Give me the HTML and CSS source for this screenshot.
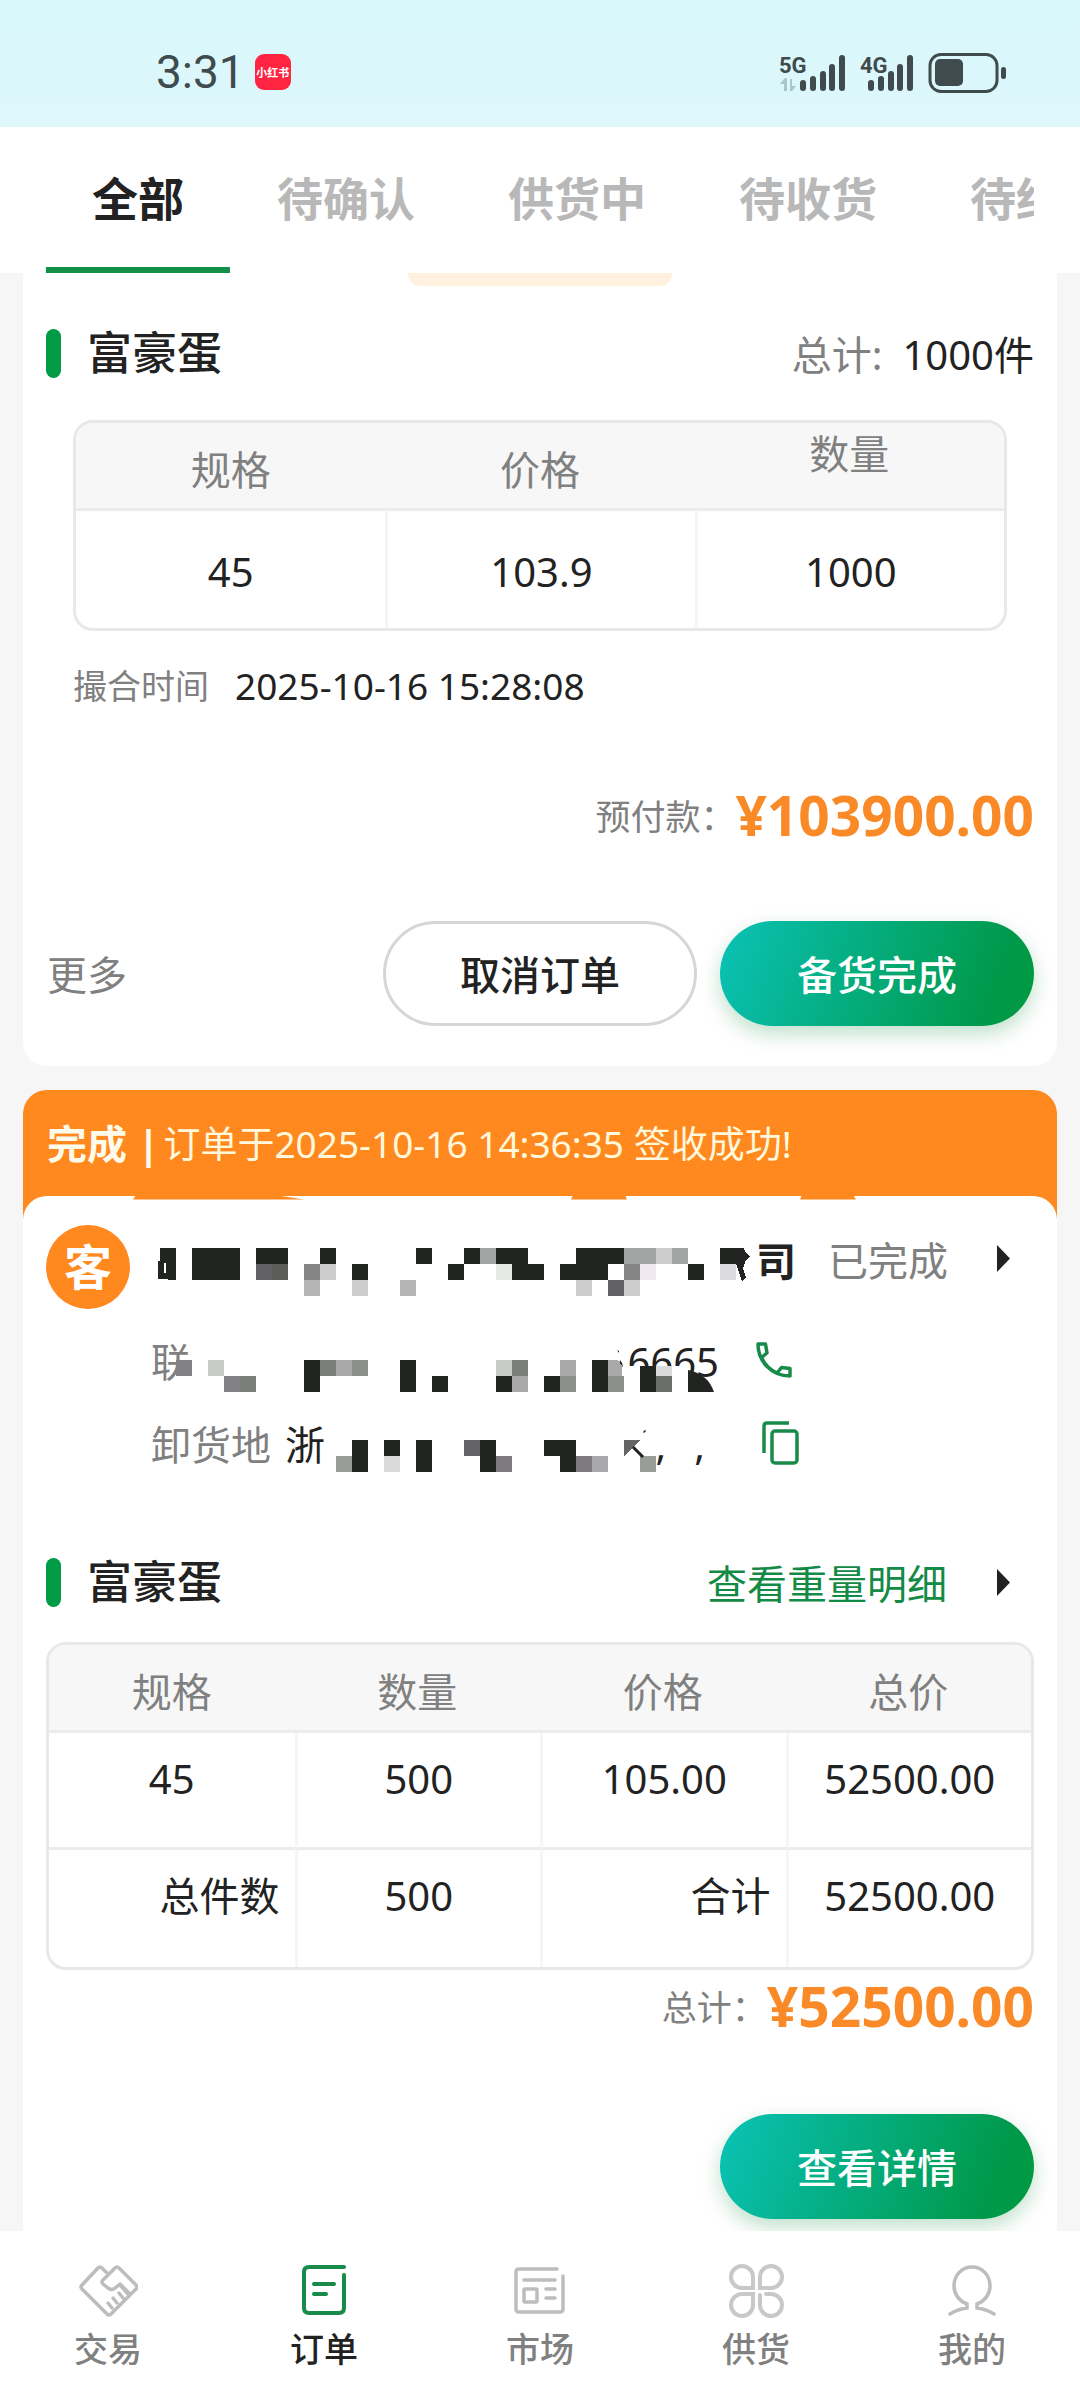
FILE: index.html
```html
<!DOCTYPE html>
<html lang="zh-CN">
<head>
<meta charset="utf-8">
<meta name="viewport" content="width=device-width, initial-scale=1">
<title>订单</title>
<link rel="stylesheet" href="styles.css">
</head>
<body>
<header class="status">
  <span class="clock">3:31</span>
  <span class="app-badge">小红书</span>
  <svg class="status-icons" width="232" height="44" viewBox="776 50 232 44" fill="#404b4d">
    <text class="net" x="779" y="73">5G</text>
    <path fill="#a9c7ca" d="M780 84l5-6h2v13h-3v-7zM790 79h2v7h4l-4 5h-2z"/>
    <rect x="800" y="80" width="6" height="11" rx="3"/><rect x="810" y="76" width="6" height="15" rx="3"/><rect x="820" y="71" width="6" height="20" rx="3"/><rect x="829" y="64" width="6" height="27" rx="3"/><rect x="839" y="55" width="6" height="36" rx="3"/>
    <text class="net" x="860" y="73">4G</text>
    <rect x="868" y="80" width="6" height="11" rx="3"/><rect x="878" y="76" width="6" height="15" rx="3"/><rect x="888" y="71" width="6" height="20" rx="3"/><rect x="897" y="64" width="6" height="27" rx="3"/><rect x="907" y="55" width="6" height="36" rx="3"/>
    <rect x="930" y="54.500" width="67" height="37" rx="11" fill="none" stroke="#404b4d" stroke-width="3"/>
    <rect x="935" y="59" width="28" height="27" rx="5"/><rect x="1001" y="67" width="5" height="12" rx="2.500"/>
  </svg>
</header>

<nav class="tabs">
  <div class="tab-strip">
    <a class="tab active" href="#">全部</a>
    <a class="tab" href="#">待确认</a>
    <a class="tab" href="#">供货中</a>
    <a class="tab" href="#">待收货</a>
    <a class="tab" href="#">待结算</a>
  </div>
</nav>

<main class="orders">
  <article class="card card-first">
    <div class="pill"></div>
    <div class="title-row first-title">
      <h2 class="title">富豪蛋</h2>
      <p class="count"><span class="muted">总计:</span>1000件</p>
    </div>
    <div class="grid-box inset">
      <table>
        <thead><tr><th>规格</th><th>价格</th><th class="raised">数量</th></tr></thead>
        <tbody><tr class="roomy"><td>45</td><td>103.9</td><td>1000</td></tr></tbody>
      </table>
    </div>
    <p class="time"><span class="muted">撮合时间</span><time>2025-10-16 15:28:08</time></p>
    <p class="sum prepaid"><span class="sum-label">预付款：</span><strong>¥103900.00</strong></p>
    <div class="actions">
      <a class="more" href="#">更多</a>
      <button class="btn plain" type="button">取消订单</button>
      <button class="btn primary" type="button">备货完成</button>
    </div>
  </article>

  <article class="card card-done">
    <p class="banner"><strong>完成 |</strong><span>订单于2025-10-16 14:36:35 签收成功!</span></p>
    <div class="body">
      <svg class="scallops" width="730" height="4" viewBox="130 1196 730 4" fill="#ff881f"><path d="M136 1195H275L304 1199.500H133zM573 1195H625L627 1199.500H571zM802 1195H853L856 1199.500H800z"/></svg>
      <section class="customer">
        <div class="company">
          <span class="avatar">客</span>
          <span class="name">司</span>
          <span class="state">已完成</span>
          <svg class="arrow" width="13" height="27" viewBox="0 0 13 27"><path d="M0 0 13 13.500 0 27z" fill="#222"/></svg>
        </div>
        <div class="info">
          <span class="muted">联</span><span class="phone">6665</span>
          <button class="icon-btn call" type="button" aria-label="拨打电话">
            <svg width="36" height="36" viewBox="0 0 36 36" fill="none" stroke="#188a49" stroke-width="3.500" stroke-linejoin="round"><path d="M2 2h7.500l1.500 9-5.500 4.500C9 23 14 28 21 31l4.500-5.500 8.500 1V34C15 34 2 19 2 2z"/></svg>
          </button>
        </div>
        <div class="info">
          <span class="muted">卸货地</span><span class="address"><span>浙</span><span class="commas"><span>,</span><span>,</span></span></span>
          <button class="icon-btn copy" type="button" aria-label="复制地址">
            <svg width="38" height="44" viewBox="0 0 38 44" fill="none" stroke="#188a49" stroke-width="3.500"><path d="M2 32V5q0-3 3-3h22"/><rect x="10" y="10" width="25" height="32" rx="3"/></svg>
          </button>
        </div>
        <svg class="mosaic" width="800" height="260" viewBox="46 1225 800 260" shape-rendering="crispEdges">
          <path fill="#222422" d="M160 1248h16v32h-8v-1h-10v-18h2zM192 1248h48v32h-48zM256 1248h32v16h-32zM320 1248h16v16h-16zM352 1264h16v16h-16zM416 1248h16v16h-16zM448 1264h16v16h-16zM464 1248h16v16h-16zM496 1248h32v16h16v16h-32v-16h-16zM576 1248h48v16h-16v16h-48v-16h16zM688 1264h16v16h-16zM720 1248h24l1 4 5 5-4 3-3 9 3 8-4 4-6-17h-16z"/>
          <path fill="#fff" d="M164 1263h2v10h-2zM720 1264h16v16h-16z"/>
          <path fill="#626163" d="M256 1264h16v16h-16zM608 1280h16v16h-16z"/>
          <path fill="#5c5d5b" d="M272 1264h16v16h-16z"/>
          <path fill="#848584" d="M304 1264h16v16h-16zM624 1264h16v16h-16z"/>
          <path fill="#cdcdcd" d="M320 1264h16v16h-16zM352 1280h16v16h-16zM576 1280h16v16h-16zM624 1280h16v16h-16zM656 1248h16v16h-16z"/>
          <path fill="#b4b4b4" d="M304 1280h16v16h-16zM400 1280h16v16h-16z"/>
          <path fill="#a3a5a4" d="M480 1248h16v16h-16zM624 1248h32v16h-32zM672 1248h16v16h-16z"/>
          <path fill="#e5eae6" d="M496 1264h16v16h-16z"/><path fill="#f0eaef" d="M640 1264h16v16h-16z"/><path fill="#dcdce0" d="M720 1264h16v16h-16z"/>

          <path fill="#fff" d="M180 1376h20v20h-20zM600 1366h90v28h-90z"/>
          <path fill="#828183" d="M176 1360h16v16h-16zM224 1376h16v16h-16z"/>
          <path fill="#7b7e7b" d="M240 1376h16v16h-16zM320 1360h16v16h-16zM512 1360h16v16h-16z"/>
          <path fill="#c8cac8" d="M208 1360h16v16h-16zM496 1360h16v16h-16z"/>
          <path fill="#222422" d="M304 1360h16v32h-16zM400 1360h16v32h-16zM432 1376h16v16h-16zM496 1376h16v16h-16zM544 1376h16v16h-16zM592 1360h16v32h-16zM640 1366h16v26h-16z"/>
          <path fill="#222422" shape-rendering="auto" d="M688 1370C702 1373 710 1380 714 1392h-26zM617 1350l2 1v2zM620 1360q3 3 3 7l-4-3z"/>
          <path fill="#a9a9aa" d="M336 1360h16v16h-16zM512 1376h16v16h-16zM560 1360h16v16h-16zM608 1360h10l4 6v10h-14z"/>
          <path fill="#8b8e8a" d="M352 1360h16v16h-16zM560 1376h16v16h-16zM608 1376h16v16h-16z"/>
          <path fill="#dadada" d="M656 1366h16v10h-16z"/><path fill="#6a6e69" d="M656 1376h16v16h-16z"/>

          <path fill="#222422" d="M352 1440h16v32h-16zM384 1440h16v16h-16zM416 1440h16v32h-16zM480 1440h16v32h-16zM544 1440h32v32h-16v-16h-16z"/>
          <path fill="#9a9c9a" d="M336 1456h16v16h-16zM640 1456h16v16h-16z"/><path fill="#dadada" d="M384 1456h16v16h-16z"/>
          <path fill="#646366" d="M464 1440h16v16h-16zM624 1440h16l-16 16z"/>
          <path fill="#7c7a7d" d="M496 1456h16v16h-16zM576 1456h16v16h-16z"/><path fill="#a9a8ab" d="M592 1456h16v16h-16z"/>
          <path stroke="#222" stroke-width="3" shape-rendering="auto" d="m633 1447 10 10M644 1431l1 1"/>
        </svg>
      </section>

      <div class="title-row second-title">
        <h2 class="title">富豪蛋</h2>
        <a class="detail" href="#">查看重量明细</a>
        <svg class="arrow" width="13" height="27" viewBox="0 0 13 27"><path d="M0 0 13 13.500 0 27z" fill="#222"/></svg>
      </div>
      <div class="grid-box">
        <table>
          <thead><tr><th>规格</th><th>数量</th><th>价格</th><th>总价</th></tr></thead>
          <tbody>
            <tr><td>45</td><td>500</td><td>105.00</td><td>52500.00</td></tr>
            <tr><td class="end">总件数</td><td>500</td><td class="end">合计</td><td>52500.00</td></tr>
          </tbody>
        </table>
      </div>
      <p class="sum total"><span class="sum-label">总计：</span><strong>¥52500.00</strong></p>
      <div class="actions"><button class="btn primary" type="button">查看详情</button></div>
    </div>
  </article>
</main>

<nav class="bottom-nav">
  <a class="nav-item" href="#">
    <svg width="60" height="60" viewBox="77 2262 60 60" fill="none" stroke="#bdbdbd" stroke-width="3.500" stroke-linejoin="round" stroke-linecap="round"><path d="M107 2275l-6-6q-2-2-4 0l-16 17q-2 2 0 4l25 25q2 2 4 0l25-25q2-2 0-4l-17-17q-2-2-4 0l-12 12q-2 2 0 4l5 4q4 3 7 0l5-4 9 9M107 2304l4 5M112 2299l4 5M118 2294l4 5M119 2286l8 9"/></svg>
    <span>交易</span></a>
  <a class="nav-item current" href="#">
    <svg width="60" height="60" viewBox="294 2262 60 60" fill="none" stroke="#188a49" stroke-width="4" stroke-linecap="round"><path d="M344 2268h-35q-5 0-5 5v36q0 5 5 5h30q5 0 5-5v-33M314 2285h20M314 2295h12"/></svg>
    <span>订单</span></a>
  <a class="nav-item" href="#">
    <svg width="60" height="60" viewBox="510 2262 60 60" fill="none" stroke="#bdbdbd" stroke-width="3.500" stroke-linecap="round"><path d="M557 2270h-38q-3 0-3 3v37q0 3 3 3h41q3 0 3-3v-33M524 2281h31M546 2290h9M546 2299h9"/><rect x="524" y="2290" width="13" height="13" rx="1"/></svg>
    <span>市场</span></a>
  <a class="nav-item" href="#">
    <svg width="60" height="60" viewBox="726 2262 60 60" fill="none" stroke="#c8c8c8" stroke-width="4" stroke-linecap="round"><path d="M753 2289h-11a11 11 0 1 1 11-11zM760 2289v-11a11 11 0 1 1 11 11zM753 2295v11a11 11 0 1 1-11-11zM766 2295h5a11 11 0 1 1-11 11v-10"/></svg>
    <span>供货</span></a>
  <a class="nav-item" href="#">
    <svg width="60" height="60" viewBox="942 2262 60 60" fill="none" stroke="#bdbdbd" stroke-width="3.500" stroke-linecap="round"><path d="M950 2315q8-5 17-6v-4c-8-3-13-10-13-18 0-11 8-19 18-19s18 8 18 19c0 8-5 15-13 18v4q9 1 17 6"/></svg>
    <span>我的</span></a>
</nav>
</body>
</html>
```
FILE: styles.css
```css
* { box-sizing: border-box; }

body {
  margin: 0;
  min-height: 100vh;
  display: flex;
  flex-direction: column;
  background: #f6f6f6;
  color: #222;
  font: 40px/50px "Noto Sans", "Noto Sans CJK SC", sans-serif;
}

h2, p { margin: 0; }
a { color: inherit; text-decoration: none; }
button { font: inherit; border: 0; padding: 0; background: none; }
svg { display: block; flex: none; }
.muted { color: #808080; }

/* Status bar */
.status {
  display: flex;
  align-items: center;
  padding: 50px 72px 33px 156px;
  background: linear-gradient(#d8f8fb, #def7fb);
}
.clock { font: 46px/44px Roboto, sans-serif; color: #404b4d; }
.app-badge {
  width: 36px;
  margin-left: 10px;
  border-radius: 9px;
  background: #ff2442;
  color: #fff;
  font: 700 11px/36px "Noto Sans CJK SC", sans-serif;
  text-align: center;
}
.status-icons { margin-left: auto; }
.net { font: 700 22px Roboto, sans-serif; }

/* Order filter tabs, scrolled sideways */
.tabs { padding: 0 46px; background: #fff; }
.tab-strip { display: flex; gap: 1px; overflow-x: auto; scrollbar-width: none; }
.tab {
  flex: none;
  padding: 41px 46px 39px;
  border-bottom: 6px solid transparent;
  color: #b8b8b8;
  font-weight: 700;
  font-size: 46px;
  line-height: 60px;
}
.tab.active { color: #222; border-color: #138f47; }

/* Order cards */
.orders {
  display: flex;
  flex-direction: column;
  gap: 24px;
  padding: 0 23px;
}
.card-first {
  padding: 0 23px 40px;
  background: #fff;
  border-radius: 0 0 24px 24px;
}
.pill {
  width: 264px;
  height: 13px;
  margin: 0 auto;
  border-radius: 0 0 12px 12px;
  background: #fff1de;
}
.title-row { display: flex; align-items: center; height: 60px; }
.first-title { margin: 37px 0; }
.second-title { margin: 77px 0 30px; }
.title {
  display: flex;
  align-items: center;
  gap: 26px;
  margin-right: auto;
  font-size: 45px;
  font-weight: 500;
  line-height: 60px;
}
.title::before {
  content: "";
  width: 15px;
  height: 49px;
  border-radius: 8px;
  background: #009b44;
}
.count, .detail { padding-top: 3px; }
.count .muted { margin-right: 20px; }
.detail { color: #138a45; }
.arrow { margin: 0 24px 0 50px; }

.grid-box {
  border: 3px solid #e8e8e8;
  border-radius: 20px;
  overflow: hidden;
}
.inset { margin: 0 27px; }
table { width: 100%; table-layout: fixed; border-collapse: separate; border-spacing: 0; }
th {
  height: 88px;
  padding: 22px 0 0;
  background: #f7f7f7;
  border-bottom: 3px solid #ececec;
  color: #808080;
  font-weight: 400;
  vertical-align: top;
}
th.raised { padding-top: 6px; }
td {
  height: 117px;
  padding: 21px 0 0;
  text-align: center;
  vertical-align: top;
}
tbody tr:not(:last-child) td { border-bottom: 3px solid #ececec; }
td:not(:first-child) { border-left: 3px solid #f6f6f6; }
.roomy td { padding-top: 36px; }
td.end { padding-right: 15px; text-align: right; }

.time { display: flex; gap: 26px; margin: 30px 27px 0; font-size: 34px; }
.time time { font-size: 37px; }

.sum { display: flex; justify-content: flex-end; align-items: center; line-height: 70px; }
.sum-label { color: #808080; font-size: 35px; }
.sum strong { color: #f98a27; font-size: 55px; line-height: 66px; padding-bottom: 4px; }
.prepaid { margin: 71px 0 69px; }
.total { margin: 3px 0 71px; }

.actions { display: flex; align-items: center; justify-content: flex-end; gap: 23px; }
.more { margin-right: auto; padding: 3px 0 0 1px; color: #808080; }
.btn { width: 314px; height: 105px; padding-top: 3px; border-radius: 53px; font-weight: 500; }
.plain { border: 3px solid #d6d6d6; background: #fff; color: #222; }
.primary {
  background: linear-gradient(110deg, #0ac2b6, #00994a 85%, #009b40);
  color: #fff;
  box-shadow: 0 8px 20px rgba(0, 130, 50, 0.25);
}

/* Completed order */
.card-done {
  background: linear-gradient(#ff881f 140px, #fff 140px);
  border-radius: 24px 24px 0 0;
  overflow: hidden;
}
.banner { display: flex; gap: 4px; padding: 29px 24px 27px; color: #fff8dc; white-space: nowrap; }
.banner strong { color: #fffbea; }
.banner span { font-size: 37px; }
.body {
  position: relative;
  padding: 29px 23px 12px;
  border-radius: 24px 24px 0 0;
  background: #fff;
}
.scallops { position: absolute; top: 0; left: 107px; }
.customer { position: relative; }
.company { display: flex; align-items: center; white-space: nowrap; }
.avatar {
  width: 84px;
  border-radius: 50%;
  background: #ff881f;
  color: #fff;
  font-size: 48px;
  font-weight: 700;
  line-height: 84px;
  text-align: center;
}
.name { flex: 0 0 666px; text-align: right; font-weight: 700; padding-bottom: 12px; }
.state { margin: 0 auto 0 32px; padding-bottom: 12px; color: #808080; }
.company .arrow { margin-bottom: 18px; margin-left: 0; }
.info { display: flex; align-items: center; height: 60px; margin-top: 23px; padding-left: 105px; }
.phone { flex: 0 0 528px; text-align: right; }
.address { display: flex; justify-content: space-between; width: 420px; margin-left: 14px; }
.commas { display: flex; gap: 28px; }
.call { margin: 0 0 4px 37px; }
.copy { margin: 0 0 4px 57px; }
.mosaic { position: absolute; top: 0; left: 0; pointer-events: none; }

/* Bottom navigation */
.bottom-nav { position: relative; flex: 1; display: flex; padding: 30px 0 25px; background: #fff; }
.nav-item {
  flex: 1;
  display: flex;
  flex-direction: column;
  align-items: center;
  gap: 3px;
  color: #808080;
  font-size: 34px;
  font-weight: 500;
}
.current { color: #222; }
```
